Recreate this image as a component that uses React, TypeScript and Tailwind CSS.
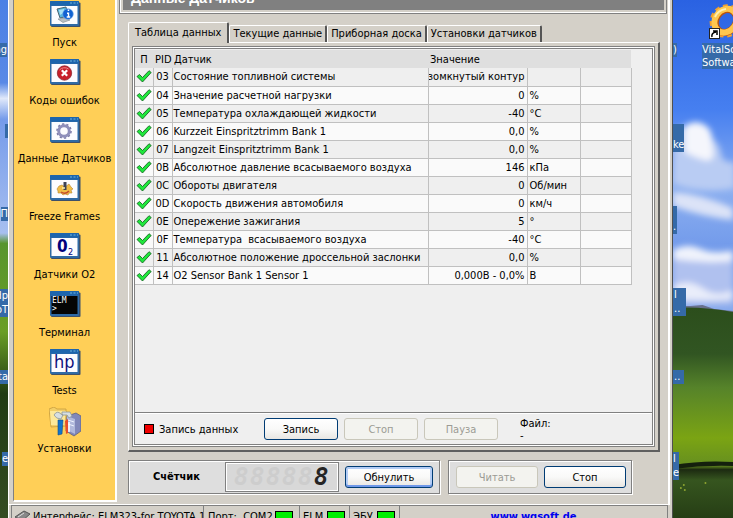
import React, { useState } from "react";
import type { ReactNode } from "react";
import clsx from "clsx";

type SensorRow = { pid: string; name: string; value: string; unit: string };

const rows: SensorRow[] = [
  { pid: "03", name: "Состояние топливной системы", value: "Разомкнутый контур", unit: "" },
  { pid: "04", name: "Значение расчетной нагрузки", value: "0", unit: "%" },
  { pid: "05", name: "Температура охлаждающей жидкости", value: "-40", unit: "°C" },
  { pid: "06", name: "Kurzzeit Einspritztrimm Bank 1", value: "0,0", unit: "%" },
  { pid: "07", name: "Langzeit Einspritztrimm Bank 1", value: "0,0", unit: "%" },
  { pid: "0B", name: "Абсолютное давление всасываемого воздуха", value: "146", unit: "кПа" },
  { pid: "0C", name: "Обороты двигателя", value: "0", unit: "Об/мин" },
  { pid: "0D", name: "Скорость движения автомобиля", value: "0", unit: "км/ч" },
  { pid: "0E", name: "Опережение зажигания", value: "5", unit: "°" },
  { pid: "0F", name: "Температура  всасываемого воздуха", value: "-40", unit: "°C" },
  { pid: "11", name: "Абсолютное положение дроссельной заслонки", value: "0,0", unit: "%" },
  { pid: "14", name: "O2 Sensor Bank 1 Sensor 1", value: "0,000В - 0,0%", unit: "В" },
];

const tabs = ["Таблица данных", "Текущие данные", "Приборная доска", "Установки датчиков"];

const WindowIcon = ({ dark, children }: { dark?: boolean; children: ReactNode }) => (
  <svg width="32" height="26" viewBox="0 0 32 26" aria-hidden="true">
    <rect x="2" y="1.5" width="29.5" height="24.5" rx="1" fill="#3e506a" />
    <rect x="1" y="0" width="29" height="25" rx="1" fill="#2f6aa5" />
    <rect x="1" y="0" width="29" height="4.5" rx="1" fill="#1d65ad" />
    <path d="M21 2h2M24.500 2h2M28 2h1" stroke="#6fb5de" strokeWidth="1.200" />
    <rect x="2.500" y="5" width="26" height="18" fill={dark ? "#050505" : "#fcfcff"} />
    {children}
  </svg>
);

const StartIcon = () => (
  <WindowIcon>
    <path d="M8 8l9-2 2 9-8 2z" fill="#57b5dc" stroke="#4b6473" />
    <path d="M10 9l5-1 1 3-5 3z" fill="#a8e2f4" />
    <path d="M9 18l8-1 4 2-7 2.500z" fill="#b9c0c4" stroke="#7c878d" strokeWidth=".6" />
    <circle cx="19" cy="13" r="5.300" fill="#1162d2" stroke="#70a9e8" strokeWidth=".6" />
    <path d="M18 12.300h1.500v3.500M17.700 16h3.500M18.700 9.300h1.500" stroke="#fff" strokeWidth="1.400" fill="none" />
  </WindowIcon>
);

const ErrorIcon = () => (
  <WindowIcon>
    <circle cx="15.500" cy="14" r="7.200" fill="#c8202b" stroke="#8d2630" strokeWidth=".8" />
    <path d="M10.500 11a6 5 0 0 1 9-1" stroke="#ef8c8c" fill="none" />
    <path d="M12.800 11.300l5.400 5.400M18.200 11.300l-5.400 5.400" stroke="#fff" strokeWidth="2.200" />
  </WindowIcon>
);

const GearIcon = () => (
  <WindowIcon>
    <circle cx="15" cy="14" r="7" fill="none" stroke="#7877a5" strokeWidth="1.600" strokeDasharray="2.200 2.200" />
    <circle cx="15" cy="14" r="5.300" fill="none" stroke="#8f8fbb" strokeWidth="3" />
  </WindowIcon>
);

const FreezeIcon = () => (
  <WindowIcon>
    <path
      d="M8 14l2-3 3-1 3 2 4-3 2 3 2 2-2 1 1 3-3 0-1 2-3-1-2 1-2-2-3 0 0-2z"
      fill="#f0bd45"
      stroke="#b78430"
      strokeWidth=".6"
    />
    <path d="M12 17q4 3 8-1" stroke="#c44b2b" strokeWidth="1.500" fill="none" />
    <path d="M16 7v8" stroke="#3d4254" strokeWidth="3" />
    <path d="M13 13h3" stroke="#fff0a8" strokeWidth="1.500" />
  </WindowIcon>
);

const OxygenIcon = () => (
  <WindowIcon>
    <text x="8" y="19" fontSize="17" fontWeight="bold" fill="#00007c" fontFamily="DejaVu Sans Condensed, sans-serif">
      0
      <tspan x="19" y="22" fontSize="9" fontWeight="normal">
        2
      </tspan>
    </text>
  </WindowIcon>
);

const TerminalIcon = () => (
  <WindowIcon dark>
    <text x="3" y="12" fontSize="8" fill="#fff" fontFamily="DejaVu Sans Mono, monospace">ELM</text>
    <text x="3" y="20" fontSize="8" fill="#fff" fontFamily="DejaVu Sans Mono, monospace">&gt;</text>
  </WindowIcon>
);

const TestsIcon = () => (
  <WindowIcon>
    <text x="5" y="19" fontSize="18" fill="#10107c" fontFamily="DejaVu Sans Condensed, sans-serif">hp</text>
  </WindowIcon>
);

const SetupIcon = () => (
  <svg width="32" height="30" viewBox="0 0 32 30" className="-mb-1" aria-hidden="true">
    <path d="M0 2l5-2 3 2h9v17l-15 1z" fill="#f3cf68" stroke="#c69c3d" strokeWidth=".8" />
    <path d="M1 4h16l-2 14H2z" fill="#fde99a" />
    <path d="M18 9l9-3 5 3v15l-7 5-8-5z" fill="#8188ba" stroke="#54597d" strokeWidth=".7" />
    <path d="M18 9l8 3v15l-8-4z" fill="#b1b9dc" />
    <path d="M19 13l6 2M19 17l6 2" stroke="#edf2ff" />
    <path d="M5 8q3-5 7-1l2 1-2 4q-5 0-7-4M13 5h8l2 4-3 2-2-3h-5z" fill="#d7dfe2" stroke="#8b969b" strokeWidth=".8" />
    <path d="M9 13h5l-1 14-4 1z" fill="#1474cb" stroke="#0e4e8c" strokeWidth=".6" />
    <path d="M16 14l3-2v14l-2 1z" fill="#ea4e29" />
    <path d="M20 15v10" stroke="#fff" strokeWidth="1.500" />
  </svg>
);

const CheckIcon = () => (
  <svg width="18" height="14" viewBox="0 0 18 14" role="img" aria-label="OK">
    <path d="M2 6.500l2.500-2L7.500 7.500 14 .7 16.200 2.500 7.500 12z" fill="#1fe83c" stroke="#0b5a16" strokeWidth=".8" />
  </svg>
);

const menu = [
  { label: "Пуск", icon: <StartIcon /> },
  { label: "Коды ошибок", icon: <ErrorIcon /> },
  { label: "Данные Датчиков", icon: <GearIcon /> },
  { label: "Freeze Frames", icon: <FreezeIcon /> },
  { label: "Датчики O2", icon: <OxygenIcon /> },
  { label: "Терминал", icon: <TerminalIcon /> },
  { label: "Tests", icon: <TestsIcon /> },
  { label: "Установки", icon: <SetupIcon /> },
];

const LeftWallpaper = () => (
  <svg className="absolute inset-0 h-full w-full" viewBox="0 0 8 518" preserveAspectRatio="none" aria-hidden="true">
    <defs>
      <linearGradient id="left-sky" x1="0" y1="0" x2="0" y2="1">
        <stop offset="0" stopColor="#4b80e5" />
        <stop offset=".16" stopColor="#5989e6" />
        <stop offset=".19" stopColor="#e1e9fa" />
        <stop offset=".23" stopColor="#759bea" />
        <stop offset=".45" stopColor="#a7bff0" />
        <stop offset=".47" stopColor="#57952d" />
        <stop offset=".64" stopColor="#6a9e26" />
        <stop offset=".76" stopColor="#203b13" />
        <stop offset="1" stopColor="#344c21" />
      </linearGradient>
    </defs>
    <rect width="8" height="518" fill="url(#left-sky)" />
  </svg>
);

const RightWallpaper = () => (
  <svg className="absolute inset-0 h-full w-full" viewBox="0 0 61 518" preserveAspectRatio="none" aria-hidden="true">
    <defs>
      <linearGradient id="sky" x1="0" y1="0" x2="0" y2="1">
        <stop offset="0" stopColor="#2a62e2" />
        <stop offset=".35" stopColor="#467ff0" />
        <stop offset=".6" stopColor="#8db0f0" />
        <stop offset=".78" stopColor="#749ceb" />
        <stop offset="1" stopColor="#86a9ed" />
      </linearGradient>
      <linearGradient id="grass" x1="0" y1="0" x2="0" y2="1">
        <stop offset="0" stopColor="#2c4e1c" />
        <stop offset=".22" stopColor="#315522" />
        <stop offset=".38" stopColor="#56832a" />
        <stop offset=".62" stopColor="#7ba413" />
        <stop offset=".75" stopColor="#668f20" />
        <stop offset=".77" stopColor="#1c2a11" />
        <stop offset=".82" stopColor="#36551f" />
        <stop offset="1" stopColor="#263e15" />
      </linearGradient>
      <filter id="cloud">
        <feGaussianBlur stdDeviation="3" />
      </filter>
    </defs>
    <rect width="61" height="312" fill="url(#sky)" />
    <g filter="url(#cloud)">
      <path d="M0 130q10-4 18-2t12-2 10 13q8 5 9 15t14 8v26q-34 6-63-4z" fill="#b9ccf3" />
      <path d="M12 126q12-8 23 1 6 6 5 20 4 10-4 14-14-3-24-9z" fill="#f5f6fc" />
      <path d="M0 192q28 2 61 16v12q-30-3-61-14z" fill="#dce3f7" />
      <path d="M0 252q12-10 25-4t24 4 12 0v53H0z" fill="#b0c1ef" />
      <path d="M0 250q15-7 28-1t33 2v10q-29 3-61-2z" fill="#f0f3fc" />
      <path d="M0 286q16-8 30 2t31 2v9q-30 3-61 0z" fill="#e9edfa" />
    </g>
    <path d="M0 306l18 0 12-1 12 4 19 2v4H0z" fill="#68708c" />
    <path d="M0 308q28-2 61 4v206H0z" fill="url(#grass)" />
    <path d="M0 465q30-5 61-3v4q-30-1-61 3z" fill="#14200d" />
    <g fill="#8fa531">
      <circle cx="8" cy="488" r="1" />
      <circle cx="11" cy="485" r="1" />
      <circle cx="33" cy="483" r="1" />
      <circle cx="12" cy="490" r="1" />
    </g>
  </svg>
);

const DesktopLabel = ({ className, children }: { className: string; children?: ReactNode }) => (
  <span className={clsx("absolute overflow-hidden bg-[#356aa8] leading-[14px] whitespace-pre text-white", className)}>
    {children}
  </span>
);

const XpButton = ({
  className,
  disabled,
  focused,
  children,
}: {
  className: string;
  disabled?: boolean;
  focused?: boolean;
  children: ReactNode;
}) => (
  <button
    disabled={disabled}
    className={clsx(
      "h-[22px] shrink-0 rounded-[3px] border pt-px leading-4",
      disabled
        ? "border-[#c9c7ba] bg-[#f3f3ef] text-[#9b9b94]"
        : "border-[#003c74] bg-gradient-to-b from-white via-[#f9f9f8] to-[#e8e6e2]",
      focused && "shadow-[inset_0_-2px_0_#6f98e8,inset_0_0_0_2px_#b4cdf5]",
      className,
    )}
  >
    {children}
  </button>
);

const StatusCell = ({ className, label, lamp }: { className: string; label: string; lamp?: boolean }) => (
  <div className={clsx("flex shrink-0 items-start overflow-hidden border-l border-[#808080] pt-[3px] whitespace-pre", className)}>
    <span>{label}</span>
    {lamp && <span className="mt-[2px] ml-auto h-4 w-[18px] shrink-0 border border-black bg-[#00f000]" />}
  </div>
);

const Sidebar = () => (
  <nav className="w-[104px] shrink-0 border-r-2 border-b-2 border-l border-r-white border-b-white border-l-[#808080] bg-[#ffcf57] pt-px">
    <ul>
      {menu.map((item) => (
        <li key={item.label}>
          <button className="flex h-[58px] w-full flex-col items-center whitespace-nowrap">
            {item.icon}
            <span className="mt-[9px] leading-[14px]">{item.label}</span>
          </button>
        </li>
      ))}
    </ul>
  </nav>
);

const SensorTable = () => (
  <table className="w-[496px] table-fixed border-collapse text-left leading-4">
    <colgroup>
      <col className="w-[18px]" />
      <col className="w-[19px]" />
      <col className="w-[256px]" />
      <col className="w-[99px]" />
      <col className="w-[53px]" />
      <col className="w-[51px]" />
    </colgroup>
    <thead>
      <tr className="h-[18px] bg-[#dfdfdf] whitespace-nowrap *:p-0 *:pt-px *:font-normal">
        <th className="text-center">П</th>
        <th>
          <span className="pl-[2px]">PID</span>
        </th>
        <th>
          <span className="pl-[2px]">Датчик</span>
        </th>
        <th>
          <span className="pl-[2px]">Значение</span>
        </th>
        <th />
        <th />
      </tr>
    </thead>
    <tbody>
      {rows.map((row) => (
        <tr
          key={row.pid}
          className="h-[18px] whitespace-pre odd:bg-[#efefef] even:bg-[#fafafa] *:border-r *:border-b *:border-[#c0c0c0] *:p-0 *:pt-px"
        >
          <td>
            <CheckIcon />
          </td>
          <td className="text-center">{row.pid}</td>
          <td>
            <span className="pl-px">{row.name}</span>
          </td>
          <td>
            <div className="flex justify-end overflow-hidden pr-[2px]">{row.value}</div>
          </td>
          <td>
            <span className="pl-[2px]">{row.unit}</span>
          </td>
          <td />
        </tr>
      ))}
    </tbody>
  </table>
);

const Tabs = () => {
  const [selected, setSelected] = useState(tabs[0]);
  return (
    <div role="tablist" className="flex h-5 items-end">
      {tabs.map((tab) => (
        <button
          key={tab}
          role="tab"
          aria-selected={tab === selected}
          onClick={() => setSelected(tab)}
          className={clsx(
            "shrink-0 rounded-t-[2px] border-t border-r-2 border-l border-t-white border-r-[#555] border-l-white bg-[#d4d0c8] whitespace-nowrap",
            tab === selected ? "z-10 -mb-px h-[21px] px-[6px]" : "h-[17px] px-[3px]",
          )}
        >
          {tab}
        </button>
      ))}
    </div>
  );
};

const RecordBar = () => (
  <div className="flex h-8 shrink-0 items-center border-t border-[#808080] pt-px shadow-[inset_0_1px_0_#fff]">
    <span className="ml-[9px] h-[10px] w-[10px] border border-black bg-[#f00000]" />
    <span className="ml-[5px] w-[105px] pt-px leading-4">Запись данных</span>
    <div className="flex gap-[6px]">
      <XpButton className="w-[74px]">Запись</XpButton>
      <XpButton className="w-[74px]" disabled>
        Стоп
      </XpButton>
      <XpButton className="w-[74px]" disabled>
        Пауза
      </XpButton>
    </div>
    <div className="ml-[22px] pt-px leading-3">
      <div>Файл:</div>
      <div>-</div>
    </div>
  </div>
);

const Counter = () => (
  <div className="flex h-[30px] w-[114px] shrink-0 items-center justify-center border border-[#808080] bg-[#d8d8d8] font-['DejaVu_Sans_Mono',monospace] text-2xl font-bold italic shadow-[inset_0_0_0_1px_#fff]">
    {["8", "8", "8", "8", "8"].map((digit, i) => (
      <span key={i} className="w-4 text-[#cdcdcd]" aria-hidden="true">
        {digit}
      </span>
    ))}
    <span className="w-4 text-[#252525]">8</span>
  </div>
);

const panel = "flex h-[34px] items-center border border-[#808080] bg-[#dedede] shadow-[inset_1px_1px_0_#fff,1px_1px_0_#fff]";

export default function App() {
  return (
    <div className="flex h-screen overflow-hidden bg-[#4b80e5] font-['DejaVu_Sans_Condensed','Open_Sans',sans-serif] text-[11px] text-black">
      <div className="relative w-2 shrink-0 overflow-hidden">
        <LeftWallpaper />
        <DesktopLabel className="top-[43px] right-px h-[14px]">ng</DesktopLabel>
        <DesktopLabel className="top-[124px] right-0 h-[14px] w-[3px]" />
        <DesktopLabel className="top-[207px] right-0 h-[14px]">П</DesktopLabel>
        <DesktopLabel className="top-[289px] right-0 h-7 text-right">{"Нр\nоТ"}</DesktopLabel>
        <DesktopLabel className="top-[370px] right-0 h-[14px]">ta</DesktopLabel>
        <DesktopLabel className="top-[452px] right-0 h-[14px]">e</DesktopLabel>
      </div>

      <main className="flex min-w-0 flex-1 flex-col border-l border-white bg-[#d4d0c8]">
        <div className="flex min-h-0 flex-1">
          <div className="flex min-w-0 flex-1 border-r-2 border-b border-white pb-[2px] pl-1">
            <Sidebar />
            <div className="ml-[2px] flex min-w-0 flex-1 flex-col">
              <header className="mr-px flex h-[14px] shrink-0 border-r border-b border-l border-[#808080] pr-[2px] pb-[3px] pl-[3px] shadow-[inset_1px_-1px_0_#fff]">
                <h1 className="flex flex-1 items-end overflow-hidden bg-[#808080] pb-1 pl-2 font-['Liberation_Sans',sans-serif] text-sm leading-4 font-bold text-white">
                  Данные Датчиков
                </h1>
              </header>
              <div className="flex min-h-0 flex-1 flex-col pt-2 pr-2 pb-2 pl-[9px]">
                <Tabs />
                <section className="flex min-h-0 flex-1 flex-col border-t border-r-2 border-b-2 border-l border-t-white border-r-[#606060] border-b-[#606060] border-l-white p-[3px]">
                  <div className="flex min-h-0 flex-1 flex-col border border-[#808080] bg-white p-px">
                    <div className="flex min-h-0 flex-1 flex-col border border-[#808080] bg-[#efefef]">
                      <div className="min-h-0 flex-1 overflow-hidden pt-px">
                        <SensorTable />
                      </div>
                      <RecordBar />
                    </div>
                  </div>
                </section>
                <div className="mt-2 flex shrink-0 gap-2">
                  <div className={clsx(panel, "w-[312px] gap-[6px] pl-6")}>
                    <strong className="w-[66px] pt-px">Счётчик</strong>
                    <Counter />
                    <XpButton className="w-[88px]" focused>
                      Обнулить
                    </XpButton>
                  </div>
                  <div className={clsx(panel, "w-[184px] gap-[6px] px-[7px]")}>
                    <XpButton className="w-[82px]" disabled>
                      Читать
                    </XpButton>
                    <XpButton className="w-[82px]">Стоп</XpButton>
                  </div>
                </div>
              </div>
            </div>
          </div>
          <div className="w-[3px] shrink-0 border-r border-[#505050]" />
        </div>

        <footer className="flex h-[13px] shrink-0 overflow-hidden border-r border-r-[#505050] pr-1 pl-[2px]">
          <div className="flex h-6 min-w-0 flex-1 border-t border-r border-[#808080]">
            <div className="flex w-[192px] shrink-0 items-start overflow-hidden border-l border-[#808080] pt-[3px] pl-[2px] whitespace-nowrap">
              <svg width="17" height="14" viewBox="0 0 17 14" className="mr-[2px] shrink-0" aria-hidden="true">
                <path d="M1 8l9-6 6 3-8 7z" fill="#888" stroke="#555" />
                <path d="M4 8l6-4" stroke="#ddd" />
              </svg>
              Интерфейс: ELM323-for TOYOTA 1
            </div>
            <StatusCell className="w-[96px] pr-[6px] pl-1" label="Порт:  COM2" lamp />
            <StatusCell className="w-[50px] pr-1 pl-[3px]" label="ELM" lamp />
            <StatusCell className="w-[50px] pr-1 pl-[3px]" label="ЭБУ" lamp />
            <div className="flex-1 border-l border-[#808080] pt-[3px] text-center">
              <a href="#wgsoft" className="font-bold text-[#0000ee] underline">
                www.wgsoft.de
              </a>
            </div>
          </div>
        </footer>
      </main>

      <aside className="relative w-[60px] shrink-0 overflow-hidden">
        <RightWallpaper />
        <DesktopLabel className="top-[43px] left-0 h-[14px] w-1">)</DesktopLabel>
        <DesktopLabel className="top-[124px] left-0 h-7">{"\nke"}</DesktopLabel>
        <DesktopLabel className="top-[206px] left-0 h-7 w-1">{"\n."}</DesktopLabel>
        <DesktopLabel className="top-[288px] left-0 h-7 w-[13px] pl-px">{"l\n.."}</DesktopLabel>
        <DesktopLabel className="top-[370px] left-0 h-[14px] w-[11px] pl-px">..</DesktopLabel>
        <DesktopLabel className="top-[452px] left-0 h-7 w-[6px]">{"l\ne"}</DesktopLabel>
        <a href="#vitalsoft" className="absolute top-1 left-[29px] text-white">
          <svg width="44" height="36" viewBox="0 0 44 36" className="ml-1" aria-hidden="true">
            <g transform="rotate(35 20 17)">
              <ellipse cx="20" cy="17" rx="14" ry="15" fill="none" stroke="#f0a030" strokeWidth="4" strokeDasharray="4.500 3.500" />
              <ellipse cx="20" cy="17" rx="10" ry="12" fill="none" stroke="#b9540f" strokeWidth="7" />
              <ellipse cx="19.500" cy="17" rx="10.500" ry="12.500" fill="none" stroke="#ffc64d" strokeWidth="6" />
            </g>
            <path d="M9 13q3-7 11-8" stroke="#fff0b0" strokeWidth="2" fill="none" />
            <rect x="3.500" y="24.500" width="10" height="10" fill="#fff" stroke="#222" />
            <path d="M6 33q-1-4 4-5M7 27h4v4" stroke="#000" strokeWidth="1.500" fill="none" />
          </svg>
          <span className="mt-[3px] block bg-[#356aa8] leading-[13px] whitespace-pre">{"VitalSo\nSoftware"}</span>
        </a>
      </aside>
    </div>
  );
}
